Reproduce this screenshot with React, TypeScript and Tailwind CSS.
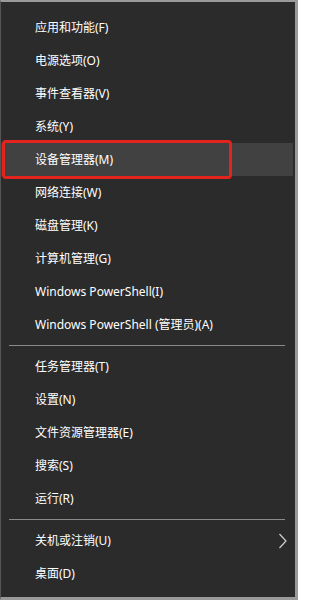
const GROUP_A = [
  '应用和功能(F)',
  '电源选项(O)',
  '事件查看器(V)',
  '系统(Y)',
  '设备管理器(M)',
  '网络连接(W)',
  '磁盘管理(K)',
  '计算机管理(G)',
  'Windows PowerShell(I)',
  'Windows PowerShell (管理员)(A)',
];

const GROUP_B = ['任务管理器(T)', '设置(N)', '文件资源管理器(E)', '搜索(S)', '运行(R)'];

const FONT = { fontFamily: '"Segoe UI", "Noto Sans", "Noto Sans CJK SC", sans-serif' };

function Item({ label, active, submenu }: { label: string; active?: boolean; submenu?: boolean }) {
  return (
    <div className={`relative flex items-center h-[33px] pl-[34px] pr-[5px] text-[12px] text-white ${active ? 'bg-[#414141]' : ''}`}>
      <span className="flex-1 leading-none">{label}</span>
      {submenu && (
        <svg width="10" height="16" viewBox="0 0 10 16" className="text-[#d0d0d0]">
          <path d="M1.5 1 L8 8 L1.5 15" fill="none" stroke="currentColor" strokeWidth="1.2" />
        </svg>
      )}
      {active && (
        <div className="absolute left-[1px] top-[-3px] w-[230px] h-[39px] border-[3px] border-[#e3231d] rounded-[4px]" />
      )}
    </div>
  );
}

function Separator() {
  return <div className="h-px mx-[8px] my-[4px] bg-[#8a8a8a]" />;
}

export default function App() {
  return (
    <div className="w-[298px] h-[600px] bg-[#2b2b2b] border-l border-t-2 border-r-[3px] border-b-[3px] border-l-[#555] border-t-[#9a9a9a] border-r-[#9a9a9a] border-b-[#9a9a9a] pr-[2px] pt-[9px] select-none" style={FONT}>
      {GROUP_A.map((l, i) => (
        <Item key={l} label={l} active={i === 4} />
      ))}
      <Separator />
      {GROUP_B.map(l => (
        <Item key={l} label={l} />
      ))}
      <Separator />
      <Item label="关机或注销(U)" submenu />
      <Item label="桌面(D)" />
    </div>
  );
}
